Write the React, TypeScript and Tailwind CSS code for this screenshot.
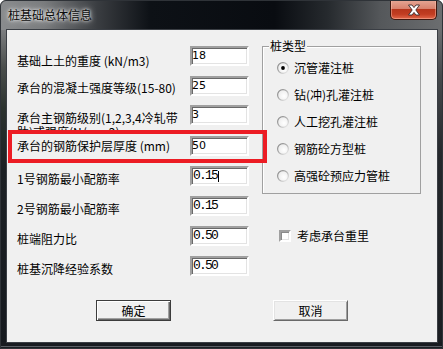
import React from "react";

type Row = {
  label: React.ReactNode;
  value: string;
  rowCls: string;
  labelCls: string;
  mono: boolean;
  caret?: boolean;
};

const rows: Row[] = [
  { label: "基础上土的重度 (kN/m3)", value: "18", rowCls: "mt-0", labelCls: "pt-[8px]", mono: false },
  { label: "承台的混凝土强度等级(15-80)", value: "25", rowCls: "mt-[10px]", labelCls: "pt-[5px]", mono: false },
  {
    label: (
      <>
        承台主钢筋级别(1,2,3,4冷轧带
        <br />
        肋)或强度(N/mm2)
      </>
    ),
    value: "3",
    rowCls: "mt-[9px]",
    labelCls: "pt-[6px] h-[25px] overflow-hidden",
    mono: false,
  },
  { label: "承台的钢筋保护层厚度 (mm)", value: "50", rowCls: "mt-[11px]", labelCls: "pt-[3px]", mono: false },
  { label: "1号钢筋最小配筋率", value: "0.15", rowCls: "mt-[10px]", labelCls: "pt-[6px]", mono: true, caret: true },
  { label: "2号钢筋最小配筋率", value: "0.15", rowCls: "mt-[10px]", labelCls: "pt-[6px]", mono: true },
  { label: "桩端阻力比", value: "0.50", rowCls: "mt-[10px]", labelCls: "pt-[6px]", mono: true },
  { label: "桩基沉降经验系数", value: "0.50", rowCls: "mt-[10px]", labelCls: "pt-[6px]", mono: true },
];

const radios = ["沉管灌注桩", "钻(冲)孔灌注桩", "人工挖孔灌注桩", "钢筋砼方型桩", "高强砼预应力管桩"];

function Radio({ checked }: { checked: boolean }) {
  return (
    <svg width="12" height="12" viewBox="0 0 12 12" className="shrink-0">
      <defs>
        <linearGradient id="rg" x1="0" y1="0" x2="1" y2="1">
          <stop offset="0%" stopColor="#7f7f7f" />
          <stop offset="55%" stopColor="#b4b4b4" />
          <stop offset="100%" stopColor="#f4f4f4" />
        </linearGradient>
        <radialGradient id="rf" cx="0.6" cy="0.6" r="0.6">
          <stop offset="0%" stopColor="#ffffff" />
          <stop offset="100%" stopColor="#ececec" />
        </radialGradient>
      </defs>
      <circle cx="6" cy="6" r="5.4" fill="url(#rf)" stroke="url(#rg)" strokeWidth="1.2" />
      {checked && <circle cx="6" cy="6" r="1.9" fill="#000" />}
    </svg>
  );
}

export default function App() {
  return (
    <div className="relative w-[443px] h-[349px] overflow-hidden bg-white font-['Noto_Sans_CJK_SC',sans-serif] text-black">
      <div className="flex flex-col w-[443px] h-[349px] rounded-t-[6px] overflow-hidden">
        {/* title bar */}
        <div className="flex items-start justify-between h-[30px] bg-[linear-gradient(to_right,#8a8c8e_0%,#7a7c7e_10%,#3a3d41_22%,#0d1116_34%,#090c11_62%,#262a2e_74%,#55585b_86%,#6c6e70_100%)]">
          <div className="ml-[8px] mt-[8px] text-[12px] leading-[14px] text-[#0c0c0c] [text-shadow:0_0_6px_#ffffff,0_0_3px_#ffffff]">
            桩基础总体信息
          </div>
          <div className="mr-[6px] w-[47px] h-[20px] rounded-b-[5px] border border-t-0 border-[#3e1810] bg-[linear-gradient(to_bottom,#e6a896_0%,#d8826e_45%,#b7361c_50%,#c23d22_75%,#e2674a_100%)] shadow-[inset_0_0_0_1px_rgba(255,200,180,0.45)] flex items-center justify-center">
            <svg width="14" height="12" viewBox="0 0 14 12">
              <path
                d="M1.5 1 L5 1 L7 3.6 L9 1 L12.5 1 L8.8 6 L12.5 11 L9 11 L7 8.4 L5 11 L1.5 11 L5.2 6 Z"
                fill="#ffffff"
                stroke="#3a2a2a"
                strokeWidth="0.9"
                strokeLinejoin="round"
              />
            </svg>
          </div>
        </div>

        {/* body */}
        <div className="flex h-[312px]">
          <div className="w-[7px] bg-[linear-gradient(to_bottom,#7c7e80_0%,#4a4e4c_12%,#2c332f_25%,#1c2024_45%,#161a1f_100%)]" />
          <div className="relative w-[430px] h-[312px] bg-[#f0f0f0] shadow-[0_0_0_1px_#3a3e44]">
            <div className="flex h-[246px] pt-[16px]">
              {/* left column */}
              <div className="flex flex-col w-[255px] pl-[10px]">
                {rows.map((r, i) => (
                  <div key={i} className={`flex items-start h-[20px] ${r.rowCls}`}>
                    <div className={`w-[173px] shrink-0 text-[12px] leading-[14px] whitespace-nowrap ${r.labelCls}`}>
                      {r.label}
                    </div>
                    <div className="relative w-[59px] h-[20px] shrink-0 bg-white border-2 border-t-[#a0a0a0] border-l-[#a0a0a0] border-b-white border-r-white shadow-[inset_1px_1px_0_#696969,inset_-1px_-1px_0_#e3e3e3] flex items-center">
                      {r.mono ? (
                        <span className="pl-[1px] font-['Liberation_Mono',monospace] text-[13px] leading-[16px] tracking-[-1.8px]">
                          {r.value}
                        </span>
                      ) : (
                        <span className="pl-0 font-['DejaVu_Sans',sans-serif] text-[11px] leading-[16px]">{r.value}</span>
                      )}
                      {r.caret && <span className="ml-[1px] w-[1px] h-[11px] bg-black" />}
                    </div>
                  </div>
                ))}
              </div>

              {/* right column */}
              <div className="flex flex-col w-[159px]">
                <div className="relative h-[148px] border border-[#a0a0a0] shadow-[inset_1px_1px_0_#ffffff] pl-[14px] pt-[7px]">
                  <span className="absolute -top-[8px] left-[6px] px-[1px] bg-[#f0f0f0] text-[12px] leading-[14px]">
                    桩类型
                  </span>
                  {radios.map((t, i) => (
                    <div key={t} className="flex items-center gap-[5px] h-[27px]">
                      <Radio checked={i === 0} />
                      <span className="text-[12px] leading-[14px] whitespace-nowrap">{t}</span>
                    </div>
                  ))}
                </div>
                <div className="flex items-center gap-[6px] mt-[35px] pl-[17px]">
                  <div className="w-[12px] h-[12px] shrink-0 bg-white border-2 border-t-[#a0a0a0] border-l-[#a0a0a0] border-b-white border-r-white shadow-[inset_1px_1px_0_#8a8a8a,inset_-1px_-1px_0_#e3e3e3]" />
                  <span className="text-[12px] leading-[14px] whitespace-nowrap">考虑承台重里</span>
                </div>
              </div>
            </div>

            {/* buttons */}
            <div className="flex mt-[24px]">
              <div className="ml-[89px] w-[75px] h-[21px] border border-[#3c3c3c] bg-[#f0f0f0] shadow-[inset_1px_1px_0_#ffffff,inset_-1px_-1px_0_#696969,inset_-2px_-2px_0_#a0a0a0] flex items-center justify-center text-[12px] leading-[14px]">
                确定
              </div>
              <div className="ml-[102px] w-[75px] h-[21px] border border-t-white border-l-white border-b-[#696969] border-r-[#696969] bg-[#f0f0f0] shadow-[inset_1px_1px_0_#e3e3e3,inset_-1px_-1px_0_#a0a0a0] flex items-center justify-center text-[12px] leading-[14px]">
                取消
              </div>
            </div>

            {/* red highlight annotation */}
            <div className="absolute left-[1px] top-[100px] w-[259px] h-[33px] border-4 border-[#ec1c24] pointer-events-none" />
          </div>
          <div className="w-[6px] bg-[linear-gradient(to_bottom,#6c6e70_0%,#45484b_15%,#25282c_40%,#1b1e22_100%)] shadow-[inset_-1px_0_0_#6a6e73]" />
        </div>
        <div className="h-[7px] bg-[#181b20] shadow-[inset_0_-2px_0_#1a1d22,inset_0_-3px_0_#5a5e64]" />
      </div>
      <div className="absolute inset-0 rounded-t-[6px] border border-[#2f3338] pointer-events-none" />
    </div>
  );
}
